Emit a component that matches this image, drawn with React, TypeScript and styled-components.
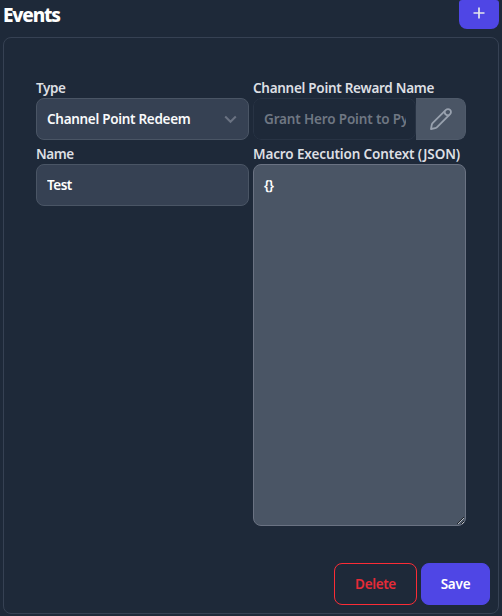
import React from "react";
import styled, { createGlobalStyle, css } from "styled-components";

const GlobalStyle = createGlobalStyle`
  *, *::before, *::after { box-sizing: border-box; }
  html, body { margin: 0; background: #1e2939; }
  body, input, textarea, button {
    font-family: "Segoe UI", "Noto Sans", "Open Sans", sans-serif;
  }
`;

const Page = styled.main`
  height: 616px;
  padding: 0 3px 2px;
  display: flex;
  flex-direction: column;
  overflow: hidden;
  background: #1e2939;
  color: #ffffff;
`;

const Header = styled.header`
  height: 37px;
  flex: none;
  display: flex;
  justify-content: space-between;
  align-items: flex-start;
`;

const Title = styled.h1`
  margin: 1px 0 0;
  font-size: 19px;
  line-height: 28px;
  font-weight: 800;
  letter-spacing: -1.2px;
`;

const AddButton = styled.button`
  width: 40px;
  height: 29px;
  padding: 0 0 3px;
  border: 0;
  border-radius: 3px 3px 8px 8px;
  background: #4f46e5;
  color: #e5e7eb;
  display: flex;
  align-items: center;
  justify-content: center;
`;

const Panel = styled.section`
  width: 496px;
  flex: 1;
  padding: 41px 8px 8px 32px;
  border: 1px solid #364153;
  border-radius: 8px;
  display: flex;
  flex-direction: column;
  justify-content: space-between;
`;

const Columns = styled.div`
  display: grid;
  grid-template-columns: 213px 213px;
  column-gap: 4px;
  align-items: start;
`;

const Column = styled.div`
  display: flex;
  flex-direction: column;
  gap: 5px;
`;

const Field = styled.div`
  display: flex;
  flex-direction: column;
`;

const Label = styled.label<{ $spacing?: number }>`
  height: 19px;
  line-height: 19px;
  font-size: 13.5px;
  font-weight: 600;
  letter-spacing: ${(p) => p.$spacing ?? -0.28}px;
  white-space: nowrap;
  color: #dddfe3;
`;

const control = css`
  height: 42px;
  border: 1px solid #4a5565;
  border-radius: 8px;
  background: #364153;
  color: #ffffff;
  font-size: 13.5px;
  font-weight: 600;
  letter-spacing: -0.3px;
  outline: none;
`;

const SelectBox = styled.div`
  ${control}
  padding: 0 11px 0 10px;
  display: flex;
  align-items: center;
  justify-content: space-between;
  color: #f9fafb;
`;

const TextInput = styled.input`
  ${control}
  width: 100%;
  padding: 0 10px;
  letter-spacing: -0.5px;
`;

const InputGroup = styled.div`
  display: flex;
  height: 42px;
  border-radius: 8px;
  overflow: hidden;
`;

const RewardInput = styled.input`
  ${control}
  width: 163px;
  padding: 0 9px 0 10px;
  border-color: #283344;
  background: #1e2939;
  color: #6f7783;
  letter-spacing: -0.15px;
`;

const EditButton = styled.button`
  flex: 1;
  padding: 0;
  border: 1px solid #4f5a6a;
  border-left: 0;
  border-radius: 0 8px 8px 0;
  background: #4a5565;
  color: #98a1ae;
  display: flex;
  align-items: center;
  justify-content: center;
`;

const JsonArea = styled.textarea`
  ${control}
  display: block;
  width: 213px;
  height: 362px;
  padding: 10px;
  border-color: #6a7282;
  background: #4a5565;
  line-height: 20px;
  letter-spacing: -0.6px;
  resize: both;
`;

const Actions = styled.div`
  display: flex;
  justify-content: flex-end;
  gap: 4px;
`;

const ActionButton = styled.button<{ $danger?: boolean }>`
  width: ${(p) => (p.$danger ? 83 : 69)}px;
  height: 42px;
  padding: 0;
  border: 1px solid ${(p) => (p.$danger ? "#fb2c36" : "#4f46e5")};
  border-radius: 8px;
  background: ${(p) => (p.$danger ? "transparent" : "#4f46e5")};
  color: ${(p) => (p.$danger ? "#e52b37" : "#ffffff")};
  font-size: 13.5px;
  font-weight: 600;
  letter-spacing: ${(p) => (p.$danger ? -0.35 : -0.25)}px;
`;

export default function App() {
  return (
    <Page>
      <GlobalStyle />
      <Header>
        <Title>Events</Title>
        <AddButton aria-label="Add event">
          <svg width="12" height="12" viewBox="0 0 12 12" fill="none" stroke="currentColor" strokeWidth="1.7">
            <path d="M6 .5v11M.5 6h11" />
          </svg>
        </AddButton>
      </Header>
      <Panel>
        <Columns>
          <Column>
            <Field>
              <Label $spacing={-0.4}>Type</Label>
              <SelectBox role="combobox">
                <span>Channel Point Redeem</span>
                <svg width="13" height="10" viewBox="0 0 13 10" fill="none" stroke="#6a7282" strokeWidth="2">
                  <path d="M1.2 2.5l5.3 5.3 5.3-5.3" />
                </svg>
              </SelectBox>
            </Field>
            <Field>
              <Label htmlFor="name" $spacing={-0.45}>Name</Label>
              <TextInput id="name" defaultValue="Test" />
            </Field>
          </Column>
          <Column>
            <Field>
              <Label htmlFor="reward">Channel Point Reward Name</Label>
              <InputGroup>
                <RewardInput id="reward" readOnly value="Grant Hero Point to Py" />
                <EditButton aria-label="Edit reward">
                  <svg width="24" height="24" viewBox="0 0 24 24" fill="none" stroke="currentColor" strokeWidth="1.8" strokeLinejoin="round" strokeLinecap="round">
                    <path d="M2 22l.8-4.3q.2-1 1-1.8L16.9 2.9a2.95 2.95 0 0 1 4.2 4.2L8.1 20.2q-.8.8-1.8 1z" />
                    <path d="M15.6 4.4q.1 3.8 4 4" />
                  </svg>
                </EditButton>
              </InputGroup>
            </Field>
            <Field>
              <Label htmlFor="context" $spacing={-0.12}>Macro Execution Context (JSON)</Label>
              <JsonArea id="context" spellCheck={false} defaultValue="{}" />
            </Field>
          </Column>
        </Columns>
        <Actions>
          <ActionButton $danger>Delete</ActionButton>
          <ActionButton>Save</ActionButton>
        </Actions>
      </Panel>
    </Page>
  );
}
